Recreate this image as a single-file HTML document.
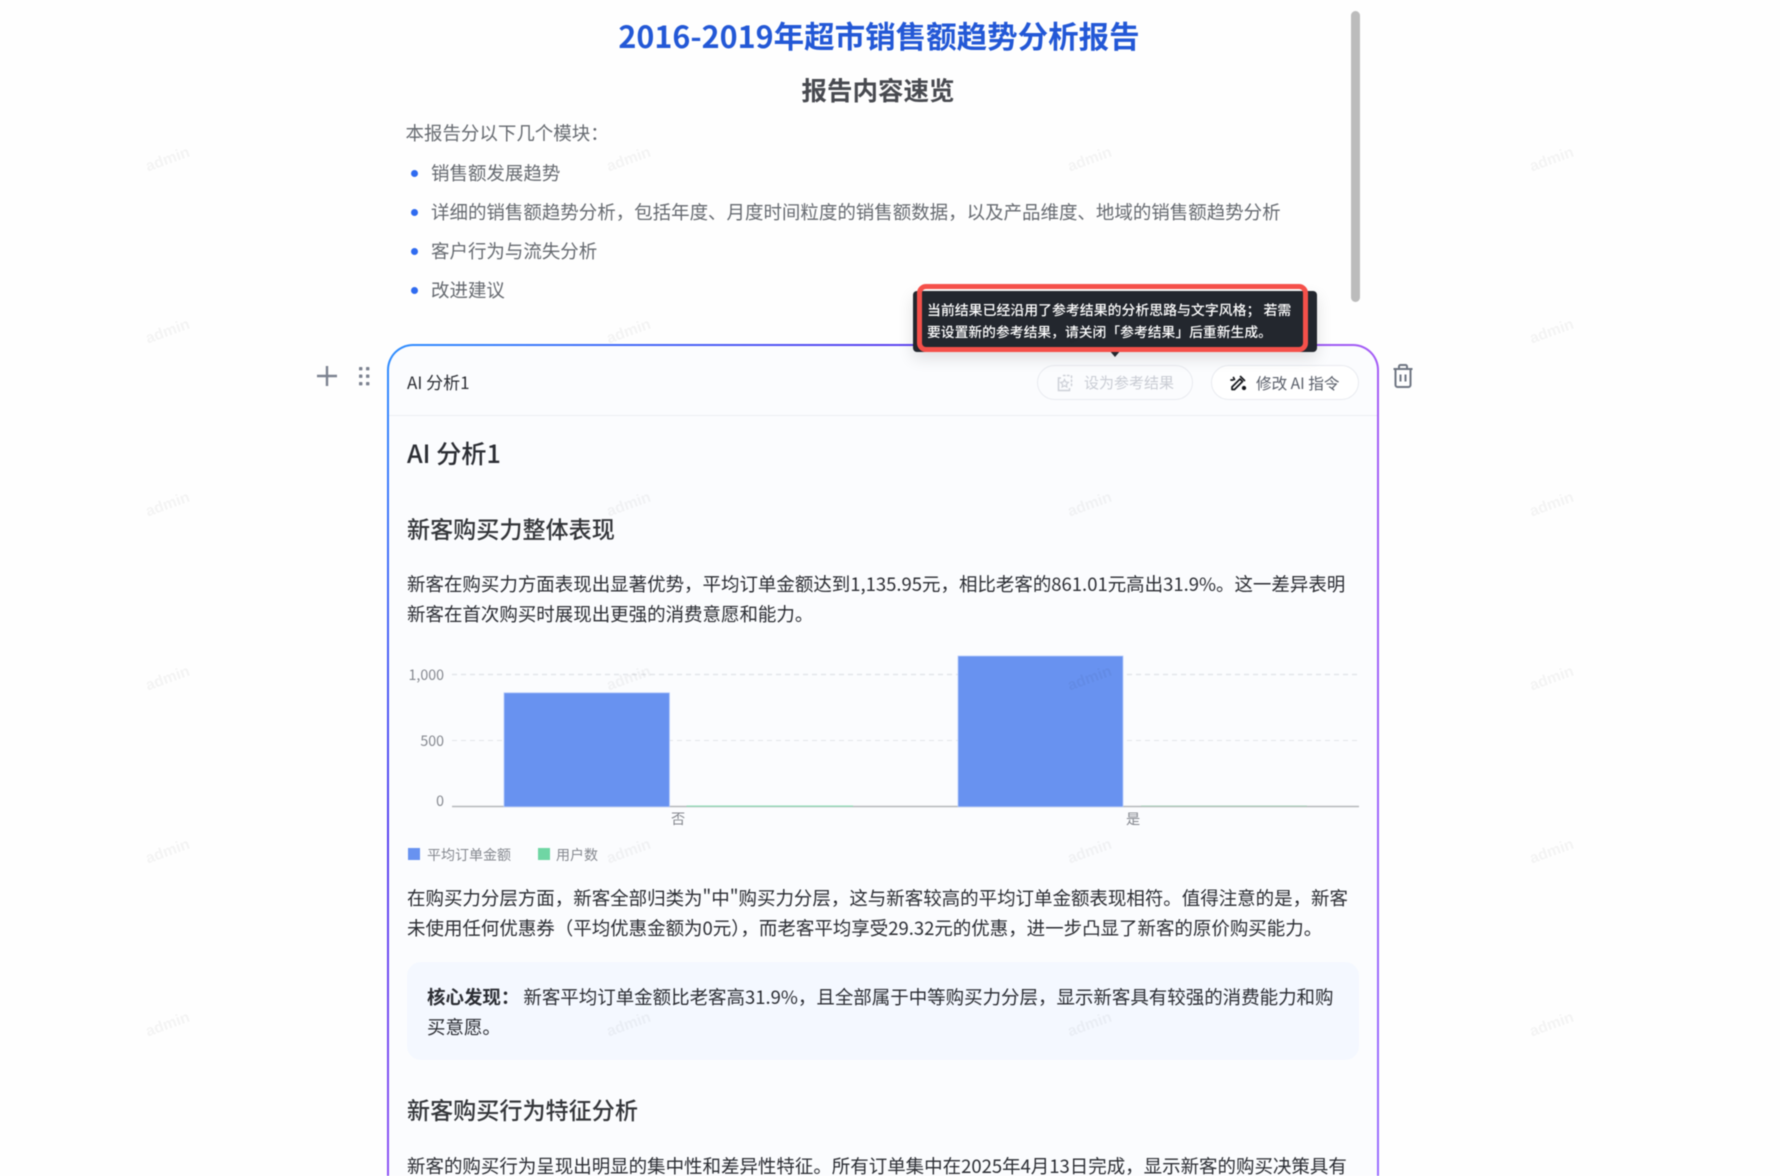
<!DOCTYPE html>
<html lang="zh-CN">
<head>
<meta charset="utf-8">
<title>2016-2019年超市销售额趋势分析报告</title>
<style>
html,body{margin:0;padding:0;background:#fefefe;width:1780px;height:1176px;overflow:hidden;}
#w{position:absolute;left:0;top:0;width:1780px;height:1176px;overflow:hidden;font-family:"Noto Sans CJK SC","Liberation Sans",sans-serif;filter:blur(.4px);}
.t{position:absolute;white-space:nowrap;line-height:30px;}
.body{font-size:18.48px;color:#2b2d33;left:407px;}
.list{font-size:18.48px;color:#666a70;}
.dot{position:absolute;left:411px;width:7px;height:7px;border-radius:50%;background:#2f6bf0;}
.wm{position:absolute;font-family:"Liberation Sans",sans-serif;font-size:15.5px;font-weight:700;color:rgba(0,0,0,.045);transform:rotate(-20deg);width:60px;text-align:center;line-height:20px;z-index:20;}
.card{position:absolute;left:387px;top:344px;width:992px;height:832px;border-radius:26px 26px 0 0;background:linear-gradient(135deg,#2f8fff 0,#5a44f0 27%,#a45cf5 54%,#9a70ff 100%);}
.inner{position:absolute;left:2.4px;top:2.4px;right:2.4px;bottom:0;border-radius:24px 24px 0 0;background:#fbfcfe;}
.btn{position:absolute;top:365px;height:35px;box-sizing:border-box;border:1.5px solid #e9ebf0;border-radius:18px;}
.lbl{position:absolute;font-size:14.2px;color:#85888f;line-height:20px;white-space:nowrap;}
.h2{left:407px;line-height:40px;font-size:23.1px;font-weight:500;color:#333539;}
</style>
</head>
<body>
<div id="w">

<div class="t" style="left:379px;width:1000px;top:15px;line-height:40px;text-align:center;font-size:30.5px;font-weight:700;color:#2358d6;">2016-2019年超市销售额趋势分析报告</div>
<div class="t" style="left:378px;width:1000px;top:70px;line-height:40px;text-align:center;font-size:25.5px;font-weight:700;color:#484a50;">报告内容速览</div>
<div class="t list" style="left:405.5px;top:118px;">本报告分以下几个模块：</div>
<div class="dot" style="top:170px"></div><div class="t list" style="left:431px;top:158px;">销售额发展趋势</div>
<div class="dot" style="top:209px"></div><div class="t list" style="left:431px;top:197px;">详细的销售额趋势分析，包括年度、月度时间粒度的销售额数据，以及产品维度、地域的销售额趋势分析</div>
<div class="dot" style="top:248px"></div><div class="t list" style="left:431px;top:236px;">客户行为与流失分析</div>
<div class="dot" style="top:287px"></div><div class="t list" style="left:431px;top:275px;">改进建议</div>

<div style="position:absolute;left:1351px;top:11px;width:9px;height:291px;border-radius:5px;background:#bcbcbc;"></div>

<svg style="position:absolute;left:315px;top:364px" width="60" height="26" viewBox="0 0 60 26">
<path d="M12 2v20M2 12h20" stroke="#7c8290" stroke-width="2.4" fill="none"/>
<g fill="#7c8290"><rect x="44" y="3" width="3.4" height="3.4" rx=".8"/><rect x="51" y="3" width="3.4" height="3.4" rx=".8"/><rect x="44" y="10.5" width="3.4" height="3.4" rx=".8"/><rect x="51" y="10.5" width="3.4" height="3.4" rx=".8"/><rect x="44" y="18" width="3.4" height="3.4" rx=".8"/><rect x="51" y="18" width="3.4" height="3.4" rx=".8"/></g>
</svg>

<div class="card"><div class="inner"></div></div>

<div class="t" style="left:407px;top:367px;font-size:17px;color:#2b2d33;">AI 分析1</div>
<div style="position:absolute;left:389px;top:415px;width:988px;height:1px;background:#eceef2;"></div>

<div class="btn" style="left:1037px;width:156px;background:#fbfcfe;"></div>
<svg style="position:absolute;left:1055px;top:373px" width="20" height="20" viewBox="0 0 20 20" fill="none" stroke="#cdd0d7" stroke-width="1.5">
<path d="M6 5H3.5v12.5h11V15"/><path d="M8.5 2.5h1.500M12.5 2.500h1.500M16.500 3v1.500M16.500 7v1.500M16.500 11v1.500" stroke-linecap="round"/>
<path d="M9.500 6.500l1.200 2.500 2.700.4-2 1.900.5 2.700-2.400-1.300-2.400 1.300.5-2.700-2-1.900 2.700-.4z" stroke-width="1.200"/>
</svg>
<div class="t" style="left:1084px;top:368px;font-size:15px;color:#c9ccd4;">设为参考结果</div>

<div class="btn" style="left:1211px;width:148px;background:#fff;"></div>
<svg style="position:absolute;left:1229px;top:374px" width="18" height="18" viewBox="0 0 18 18" fill="none" stroke="#15171c" stroke-width="1.7" stroke-linejoin="round">
<path d="M3 13l8-8 2.500 2.500-8 8H3z"/><path d="M11.500 2.500l4 4" stroke-linecap="round"/><path d="M4.500 3.500L5.500 5.500M2 6h2" stroke-linecap="round"/><circle cx="15" cy="14" r="1.300" fill="#15171c"/>
</svg>
<div class="t" style="left:1256px;top:368px;font-size:15.6px;color:#5a5f6a;">修改 AI 指令</div>

<svg style="position:absolute;left:1391px;top:363px" width="24" height="26" viewBox="0 0 24 26" fill="none" stroke="#6f7683" stroke-width="2">
<path d="M2.500 6h19M8 6V3.500a1.500 1.500 0 0 1 1.500-1.500h5A1.500 1.500 0 0 1 16 3.500V6M4.500 6v16a2 2 0 0 0 2 2h11a2 2 0 0 0 2-2V6M9.500 11.500v7M14.500 11.500v7"/>
</svg>

<div class="t" style="left:407px;top:433px;line-height:40px;font-size:25.2px;font-weight:500;color:#2b2d33;">AI 分析1</div>
<div class="t h2" style="top:508px;">新客购买力整体表现</div>
<div class="t body" style="top:569px;">新客在购买力方面表现出显著优势，平均订单金额达到1,135.95元，相比老客的861.01元高出31.9%。这一差异表明</div>
<div class="t body" style="top:599px;">新客在首次购买时展现出更强的消费意愿和能力。</div>

<svg style="position:absolute;left:400px;top:640px" width="970" height="240" viewBox="400 640 970 240">
<path d="M452 674.500H1359" stroke="#e3e5ea" stroke-width="1.500" stroke-dasharray="5 4"/>
<path d="M452 740.500H1359" stroke="#e3e5ea" stroke-width="1" stroke-dasharray="5 4"/>
<path d="M452 806.500H1359" stroke="#b5b7ba" stroke-width="1.500"/>
<rect x="686.500" y="805.500" width="166.500" height="1.200" fill="#8fdcb6"/>
<rect x="1141" y="805.500" width="166" height="1" fill="#a9cfb9"/>
<rect x="504" y="692.800" width="165.500" height="114" fill="#6892f0" stroke="#b6cbfa" stroke-width=".8"/>
<rect x="958" y="656" width="165" height="150.800" fill="#6892f0" stroke="#b6cbfa" stroke-width=".8"/>
<rect x="408" y="848" width="12" height="12" fill="#6892f0"/>
<rect x="538" y="848" width="12" height="12" fill="#6fd6a4"/>
</svg>
<div class="lbl" style="right:1336px;top:665px;">1,000</div>
<div class="lbl" style="right:1336px;top:731px;">500</div>
<div class="lbl" style="right:1336px;top:791px;">0</div>
<div class="lbl" style="left:671px;top:809px;">否</div>
<div class="lbl" style="left:1126px;top:809px;">是</div>
<div class="lbl" style="left:427px;top:845px;font-size:14px;">平均订单金额</div>
<div class="lbl" style="left:556px;top:845px;font-size:14px;">用户数</div>

<div class="t body" style="top:883px;">在购买力分层方面，新客全部归类为"中"购买力分层，这与新客较高的平均订单金额表现相符。值得注意的是，新客</div>
<div class="t body" style="top:913px;">未使用任何优惠券（平均优惠金额为0元），而老客平均享受29.32元的优惠，进一步凸显了新客的原价购买能力。</div>

<div style="position:absolute;left:407px;top:962px;width:952px;height:98px;border-radius:14px;background:#f4f8ff;"></div>
<div class="t body" style="left:427px;top:982px;"><b style="font-weight:700;margin-right:4px">核心发现：</b>新客平均订单金额比老客高31.9%，且全部属于中等购买力分层，显示新客具有较强的消费能力和购</div>
<div class="t body" style="left:427px;top:1012px;">买意愿。</div>

<div class="t h2" style="top:1089px;">新客购买行为特征分析</div>
<div class="t body" style="top:1156px;line-height:20px;">新客的购买行为呈现出明显的集中性和差异性特征。所有订单集中在2025年4月13日完成，显示新客的购买决策具有</div>

<div class="wm" style="left:138px;top:150px">admin</div><div class="wm" style="left:599px;top:150px">admin</div><div class="wm" style="left:1060px;top:150px">admin</div><div class="wm" style="left:1522px;top:150px">admin</div>
<div class="wm" style="left:138px;top:322px">admin</div><div class="wm" style="left:599px;top:322px">admin</div><div class="wm" style="left:1060px;top:322px">admin</div><div class="wm" style="left:1522px;top:322px">admin</div>
<div class="wm" style="left:138px;top:495px">admin</div><div class="wm" style="left:599px;top:495px">admin</div><div class="wm" style="left:1060px;top:495px">admin</div><div class="wm" style="left:1522px;top:495px">admin</div>
<div class="wm" style="left:138px;top:669px">admin</div><div class="wm" style="left:599px;top:669px">admin</div><div class="wm" style="left:1060px;top:669px">admin</div><div class="wm" style="left:1522px;top:669px">admin</div>
<div class="wm" style="left:138px;top:842px">admin</div><div class="wm" style="left:599px;top:842px">admin</div><div class="wm" style="left:1060px;top:842px">admin</div><div class="wm" style="left:1522px;top:842px">admin</div>
<div class="wm" style="left:138px;top:1015px">admin</div><div class="wm" style="left:599px;top:1015px">admin</div><div class="wm" style="left:1060px;top:1015px">admin</div><div class="wm" style="left:1522px;top:1015px">admin</div>

<div style="position:absolute;left:913px;top:291px;width:404px;height:61px;border-radius:4px;background:#23272e;box-shadow:0 6px 16px rgba(0,0,0,.12);z-index:10;"></div>
<div style="position:absolute;left:1109px;top:350px;width:0;height:0;border-left:6px solid transparent;border-right:6px solid transparent;border-top:7px solid #23272e;z-index:10;"></div>
<div style="position:absolute;left:917px;top:284px;width:391px;height:68px;box-sizing:border-box;border:5.5px solid #f5504a;border-radius:9px;z-index:11;"></div>
<div class="t" style="left:927px;top:299px;font-size:13.9px;font-weight:500;line-height:22px;color:#fff;z-index:12;">当前结果已经沿用了参考结果的分析思路与文字风格； 若需</div>
<div class="t" style="left:927px;top:320px;font-size:13.8px;font-weight:500;line-height:22px;color:#fff;z-index:12;">要设置新的参考结果，请关闭「参考结果」后重新生成。</div>

</div>
</body>
</html>
